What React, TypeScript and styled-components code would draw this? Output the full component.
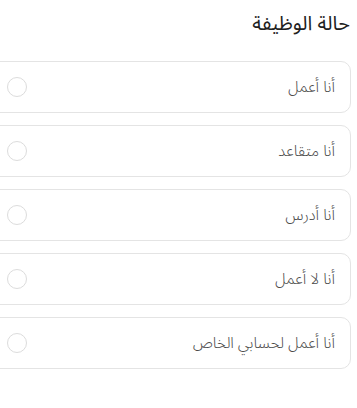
import styled, { createGlobalStyle } from "styled-components";

const GlobalStyle = createGlobalStyle`
  html, body {
    margin: 0;
    padding: 0;
    background: #ffffff;
    overflow: hidden;
  }
  body {
    font-family: "Noto Sans Arabic", "Noto Sans", "DejaVu Sans", sans-serif;
  }
`;

const Page = styled.div`
  direction: rtl;
  width: 357px;
  padding: 10px 6px 0 0;
  box-sizing: border-box;
`;

const Title = styled.h2`
  margin: 0;
  padding-right: 1px;
  font-size: 20px;
  font-weight: 400;
  line-height: 28px;
  color: #1f1f1f;
`;

const List = styled.div`
  display: flex;
  flex-direction: column;
  gap: 12px;
  margin-top: 23px;
  margin-left: -10px;
`;

const Option = styled.label`
  display: flex;
  align-items: center;
  justify-content: space-between;
  height: 52px;
  box-sizing: border-box;
  padding: 0 15px 0 16px;
  border: 1px solid #e4e4e4;
  border-radius: 10px;
  background: #ffffff;
  cursor: pointer;
`;

const OptionText = styled.span`
  font-size: 15.5px;
  font-weight: 300;
  color: #4a4a4a;
`;

const Radio = styled.span<{ $checked?: boolean }>`
  width: 20px;
  height: 20px;
  box-sizing: border-box;
  border-radius: 50%;
  border: 1px solid ${({ $checked }) => ($checked ? "#2a7de1" : "#dcdcdc")};
  background: #fff;
`;

const options = [
  "أنا أعمل",
  "أنا متقاعد",
  "أنا أدرس",
  "أنا لا أعمل",
  "أنا أعمل لحسابي الخاص",
];

export default function App() {
  return (
    <>
      <GlobalStyle />
      <Page>
        <Title>حالة الوظيفة</Title>
        <List>
          {options.map((o) => (
            <Option key={o}>
              <OptionText>{o}</OptionText>
              <Radio />
            </Option>
          ))}
        </List>
      </Page>
    </>
  );
}
